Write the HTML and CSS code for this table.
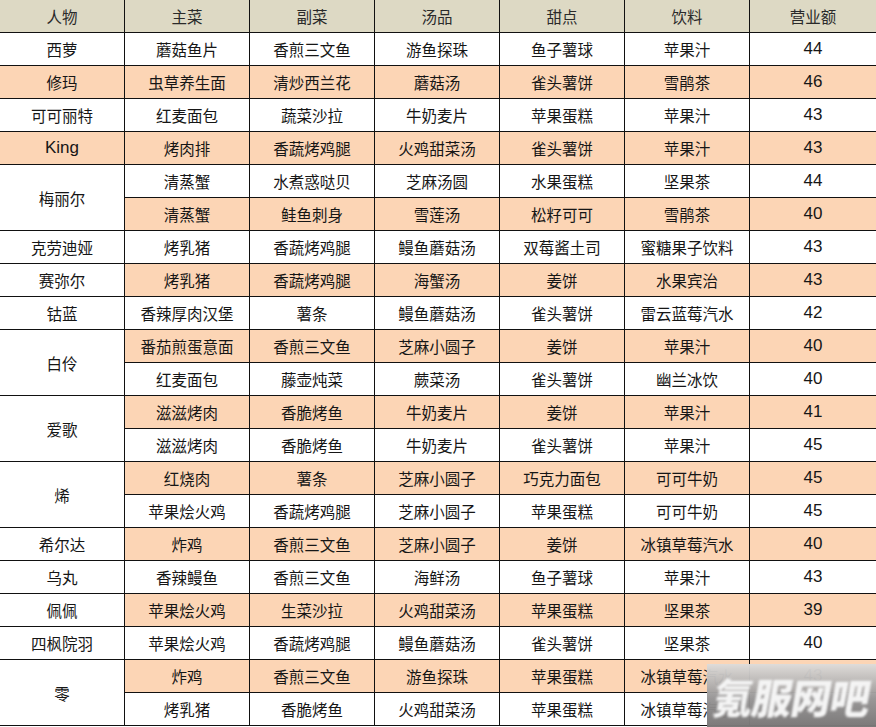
FILE: index.html
```html
<!DOCTYPE html>
<html lang="zh-CN">
<head>
<meta charset="utf-8">
<title>料理表</title>
<link rel="stylesheet" href="styles.css">
</head>
<body>
<div class="sheet">
<table class="menu">
<colgroup><col class="c"><col class="c"><col class="c"><col class="c"><col class="c"><col class="c"><col class="c last"></colgroup>
<thead>
<tr><th>人物</th><th>主菜</th><th>副菜</th><th>汤品</th><th>甜点</th><th>饮料</th><th>营业额</th></tr>
</thead>
<tbody>
<tr><td>西萝</td><td>蘑菇鱼片</td><td>香煎三文鱼</td><td>游鱼探珠</td><td>鱼子薯球</td><td>苹果汁</td><td>44</td></tr>
<tr class="o"><td>修玛</td><td>虫草养生面</td><td>清炒西兰花</td><td>蘑菇汤</td><td>雀头薯饼</td><td>雪鹃茶</td><td>46</td></tr>
<tr><td>可可丽特</td><td>红麦面包</td><td>蔬菜沙拉</td><td>牛奶麦片</td><td>苹果蛋糕</td><td>苹果汁</td><td>43</td></tr>
<tr class="o"><td class="latin">King</td><td>烤肉排</td><td>香蔬烤鸡腿</td><td>火鸡甜菜汤</td><td>雀头薯饼</td><td>苹果汁</td><td>43</td></tr>
<tr><td class="name" rowspan="2">梅丽尔</td><td>清蒸蟹</td><td>水煮惑哒贝</td><td>芝麻汤圆</td><td>水果蛋糕</td><td>坚果茶</td><td>44</td></tr>
<tr class="o"><td>清蒸蟹</td><td>鲑鱼刺身</td><td>雪莲汤</td><td>松籽可可</td><td>雪鹃茶</td><td>40</td></tr>
<tr><td>克劳迪娅</td><td>烤乳猪</td><td>香蔬烤鸡腿</td><td>鳗鱼蘑菇汤</td><td>双莓酱土司</td><td>蜜糖果子饮料</td><td>43</td></tr>
<tr class="o"><td class="name">赛弥尔</td><td>烤乳猪</td><td>香蔬烤鸡腿</td><td>海蟹汤</td><td>姜饼</td><td>水果宾治</td><td>43</td></tr>
<tr><td>钴蓝</td><td>香辣厚肉汉堡</td><td>薯条</td><td>鳗鱼蘑菇汤</td><td>雀头薯饼</td><td>雷云蓝莓汽水</td><td>42</td></tr>
<tr class="o"><td class="name" rowspan="2">白伶</td><td>番茄煎蛋意面</td><td>香煎三文鱼</td><td>芝麻小圆子</td><td>姜饼</td><td>苹果汁</td><td>40</td></tr>
<tr><td>红麦面包</td><td>藤壶炖菜</td><td>蕨菜汤</td><td>雀头薯饼</td><td>幽兰冰饮</td><td>40</td></tr>
<tr class="o"><td class="name" rowspan="2">爱歌</td><td>滋滋烤肉</td><td>香脆烤鱼</td><td>牛奶麦片</td><td>姜饼</td><td>苹果汁</td><td>41</td></tr>
<tr><td>滋滋烤肉</td><td>香脆烤鱼</td><td>牛奶麦片</td><td>雀头薯饼</td><td>苹果汁</td><td>45</td></tr>
<tr class="o"><td class="name" rowspan="2">烯</td><td>红烧肉</td><td>薯条</td><td>芝麻小圆子</td><td>巧克力面包</td><td>可可牛奶</td><td>45</td></tr>
<tr><td>苹果烩火鸡</td><td>香蔬烤鸡腿</td><td>芝麻小圆子</td><td>苹果蛋糕</td><td>可可牛奶</td><td>45</td></tr>
<tr class="o"><td class="name">希尔达</td><td>炸鸡</td><td>香煎三文鱼</td><td>芝麻小圆子</td><td>姜饼</td><td>冰镇草莓汽水</td><td>40</td></tr>
<tr><td>乌丸</td><td>香辣鳗鱼</td><td>香煎三文鱼</td><td>海鲜汤</td><td>鱼子薯球</td><td>苹果汁</td><td>43</td></tr>
<tr class="o"><td class="name">佩佩</td><td>苹果烩火鸡</td><td>生菜沙拉</td><td>火鸡甜菜汤</td><td>苹果蛋糕</td><td>坚果茶</td><td>39</td></tr>
<tr><td>四枫院羽</td><td>苹果烩火鸡</td><td>香蔬烤鸡腿</td><td>鳗鱼蘑菇汤</td><td>雀头薯饼</td><td>坚果茶</td><td>40</td></tr>
<tr class="o"><td class="name" rowspan="2">零</td><td>炸鸡</td><td>香煎三文鱼</td><td>游鱼探珠</td><td>苹果蛋糕</td><td>冰镇草莓汽水</td><td>43</td></tr>
<tr><td>烤乳猪</td><td>香脆烤鱼</td><td>火鸡甜菜汤</td><td>苹果蛋糕</td><td>冰镇草莓汽水</td><td>43</td></tr>
</tbody>
</table>
<div class="watermark"><span>氪服网吧</span></div>
</div>
</body>
</html>
```

FILE: styles.css
```css
html, body {
  margin: 0;
  padding: 0;
  background: #ffffff;
}

.sheet {
  position: relative;
  width: 876px;
  height: 727px;
  overflow: hidden;
}

.menu {
  table-layout: fixed;
  border-collapse: separate;
  border-spacing: 0;
  width: 876px;
  font-family: "Liberation Sans", "Noto Sans CJK SC", sans-serif;
  font-size: 15.5px;
  color: #161616;
}

.menu .c {
  width: 125px;
}

.menu .c.last {
  width: 126px;
}

.menu th,
.menu td {
  box-sizing: border-box;
  height: 33px;
  padding: 0;
  text-align: center;
  vertical-align: middle;
  border-right: 1px solid #111;
  border-bottom: 1px solid #111;
  font-weight: normal;
  white-space: nowrap;
  background: #ffffff;
}

.menu th:last-child,
.menu td:last-child {
  border-right: none;
}

.menu td:last-child,
.menu td.latin {
  font-size: 17px;
}

.menu th {
  background: #ddd9c4;
  color: #2a2a2a;
}

.menu tr.o td {
  background: #fcd5b5;
}

.menu tr.o td.name {
  background: #ffffff;
}

.watermark {
  position: absolute;
  left: 707px;
  top: 664px;
  width: 169px;
  height: 63px;
  background: linear-gradient(to bottom, rgba(222, 220, 218, 0.97), rgba(150, 148, 148, 0.97) 55%, rgba(120, 118, 118, 0.98));
  display: flex;
  align-items: center;
  justify-content: center;
  overflow: hidden;
}

.watermark span {
  font-family: "Noto Sans CJK SC", sans-serif;
  font-weight: 900;
  font-size: 40px;
  letter-spacing: -1px;
  color: #f4f4f4;
  transform: skewX(-10deg);
  filter: blur(1.2px);
  white-space: nowrap;
}
```
